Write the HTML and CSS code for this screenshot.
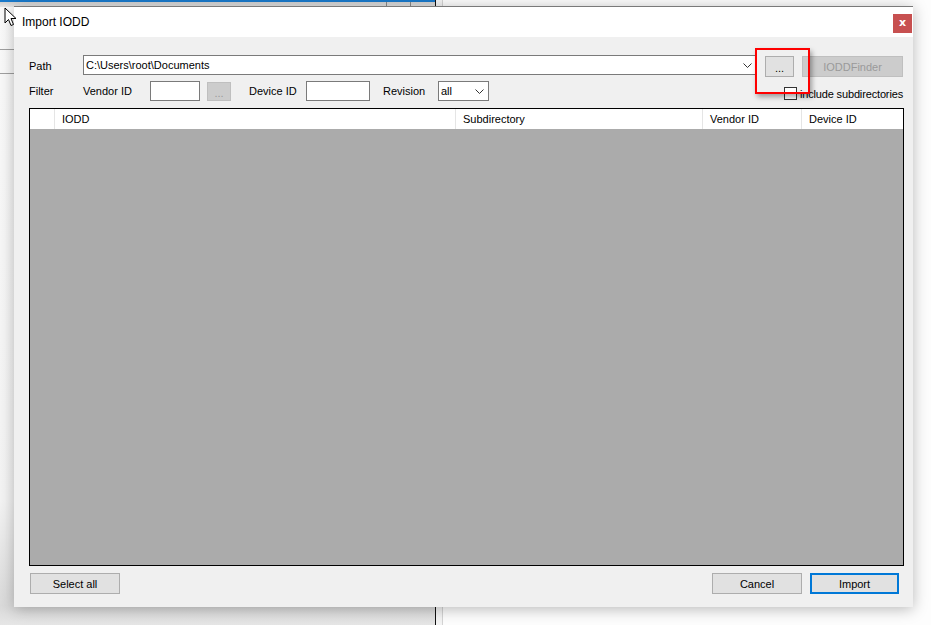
FILE: index.html
```html
<!DOCTYPE html>
<html>
<head>
<meta charset="utf-8">
<link rel="stylesheet" href="styles.css">
</head>
<body>
<div class="desktop">
  <div class="bg-left">
    <div class="bg-topbar"><span class="sep s1"></span><span class="sep s2"></span></div>
    <div class="bg-row r1"></div>
    <div class="bg-row r2"></div>
  </div>
  <div class="bg-divider"></div>
  <div class="bg-right"></div>

  <div class="dialog">
    <div class="titlebar">
      <span class="title">Import IODD</span>
      <span class="close">x</span>
    </div>
    <div class="body">
      <div class="row row-path">
        <span class="lbl w-path">Path</span>
        <div class="combo path-combo">
          <span class="combo-text">C:\Users\root\Documents</span>
          <svg class="chev" width="9" height="5" viewBox="0 0 9 5"><path d="M0.5 0.5 L4.5 4.5 L8.5 0.5" fill="none" stroke="#333" stroke-width="1"/></svg>
        </div>
        <button class="btn browse">...</button>
        <button class="btn disabled finder">IODDFinder</button>
      </div>
      <div class="row row-filter">
        <span class="lbl w-filter">Filter</span>
        <span class="lbl w-vendor">Vendor ID</span>
        <span class="input in-vendor"></span>
        <button class="btn disabled small">...</button>
        <span class="lbl w-device">Device ID</span>
        <span class="input in-device"></span>
        <span class="lbl w-rev">Revision</span>
        <div class="combo rev-combo">
          <span class="combo-text">all</span>
          <svg class="chev" width="9" height="5" viewBox="0 0 9 5"><path d="M0.5 0.5 L4.5 4.5 L8.5 0.5" fill="none" stroke="#333" stroke-width="1"/></svg>
        </div>
        <span class="spacer"></span>
        <label class="check"><span class="box"></span><span class="check-text">include subdirectories</span></label>
      </div>
      <div class="grid">
        <div class="grid-head">
          <span class="col c0"></span>
          <span class="col c1">IODD</span>
          <span class="col c2">Subdirectory</span>
          <span class="col c3">Vendor ID</span>
          <span class="col c4">Device ID</span>
        </div>
        <div class="grid-body"></div>
      </div>
      <div class="row row-bottom">
        <button class="btn wide">Select all</button>
        <span class="spacer"></span>
        <button class="btn wide">Cancel</button>
        <button class="btn wide primary">Import</button>
      </div>
    </div>
    <div class="highlight"></div>
  </div>

  <svg class="cursor" width="14" height="20" viewBox="0 0 14 20"><path d="M1 1 L1 16 L4.5 12.5 L7 18.5 L9.5 17.5 L7 11.5 L12 11.5 Z" fill="#fff" stroke="#000" stroke-width="1" stroke-linejoin="miter"/></svg>
</div>
</body>
</html>
```

FILE: styles.css
```css
html, body {
  margin: 0;
  padding: 0;
}
body {
  width: 931px;
  height: 625px;
  overflow: hidden;
  font-family: "Liberation Sans", Arial, sans-serif;
  font-size: 11px;
  color: #000;
  background: #f0f0f0;
}
.desktop {
  position: relative;
  width: 931px;
  height: 625px;
  overflow: hidden;
}
.bg-left {
  position: absolute;
  left: 0;
  top: 0;
  width: 435px;
  height: 625px;
  background: linear-gradient(#fafafa, #f4f4f4 80%, #dadada 97%, #e6e6e6);
}
.bg-topbar {
  position: relative;
  height: 5px;
  border-top: 2px solid #1979ca;
  background: linear-gradient(#d0d0d0, #e8e8e8);
}
.bg-topbar .sep {
  position: absolute;
  top: 0;
  width: 1px;
  height: 5px;
  background: #8a8a8a;
}
.sep.s1 { left: 386px; }
.sep.s2 { left: 410px; }
.bg-row {
  position: absolute;
  left: 0;
  width: 435px;
  height: 1px;
  background: #a0a0a0;
}
.bg-row.r1 { top: 49px; }
.bg-row.r2 { top: 73px; }
.bg-divider {
  position: absolute;
  left: 435px;
  top: 0;
  width: 1px;
  height: 625px;
  background: #111;
}
.bg-right {
  position: absolute;
  left: 436px;
  top: 0;
  width: 495px;
  height: 625px;
  border-left: 6px solid #f4f4f4;
  box-sizing: border-box;
  background: #fdfdfd;
}
.bg-right::before {
  content: "";
  position: absolute;
  left: 0;
  top: 0;
  width: 1px;
  height: 625px;
  background: #d4d4d4;
}

.dialog {
  position: absolute;
  left: 14px;
  top: 6px;
  width: 899px;
  height: 601px;
  background: #f0f0f0;
  border-top: 1px solid #7a7a7a;
  box-sizing: border-box;
  box-shadow: 0 2px 14px rgba(0, 0, 0, 0.28);
  display: flex;
  flex-direction: column;
}
.titlebar {
  height: 30px;
  background: #fff;
  display: flex;
  align-items: center;
  padding-left: 8px;
  position: relative;
  flex: none;
}
.title {
  font-size: 12px;
  color: #000;
}
.close {
  position: absolute;
  right: 1px;
  top: 7px;
  width: 19px;
  height: 19px;
  background: #c75050;
  color: #fff;
  font-weight: bold;
  font-size: 11px;
  line-height: 17px;
  text-align: center;
  font-family: "DejaVu Sans", sans-serif;
}
.body {
  flex: 1;
  padding: 18px 9px 0 15px;
  display: flex;
  flex-direction: column;
}
.row {
  display: flex;
  align-items: center;
}
.row-path { height: 22px; }
.lbl { white-space: nowrap; flex: none; }
.w-path { width: 54px; }
.combo {
  height: 20px;
  box-sizing: border-box;
  border: 1px solid #7a7a7a;
  background: #fff;
  display: flex;
  align-items: center;
  position: relative;
  flex: none;
}
.combo-text { padding-left: 2px; }
.chev { position: absolute; right: 4px; top: 7px; }
.path-combo { width: 674px; align-self: flex-start; }
.btn {
  font-family: inherit;
  font-size: 11px;
  color: #000;
  background: #e1e1e1;
  border: 1px solid #adadad;
  box-sizing: border-box;
  padding: 0;
  margin: 0;
  flex: none;
}
.btn.disabled {
  background: #cccccc;
  border-color: #bfbfbf;
  color: #9a9a9a;
}
.browse {
  width: 29px;
  height: 21px;
  margin-left: 8px;
  margin-top: 1px;
  line-height: 18px;
  padding-top: 2px;
}
.finder {
  width: 101px;
  height: 21px;
  margin-left: 8px;
  margin-top: 1px;
}
.row-filter {
  height: 20px;
  margin-top: 4px;
}
.w-filter { width: 54px; }
.w-vendor { width: 67px; }
.input {
  height: 20px;
  box-sizing: border-box;
  border: 1px solid #7a7a7a;
  background: #fff;
  flex: none;
}
.in-vendor { width: 50px; }
.btn.small {
  width: 24px;
  height: 19px;
  margin-left: 7px;
  margin-top: 1px;
  padding-top: 3px;
  line-height: 14px;
}
.w-device { width: 57px; margin-left: 18px; }
.in-device { width: 64px; }
.w-rev { width: 55px; margin-left: 13px; }
.rev-combo { width: 51px; }
.spacer { flex: 1; }
.check {
  display: flex;
  align-items: center;
  margin-top: 5px;
  margin-right: 1px;
}
.check .box {
  width: 13px;
  height: 13px;
  box-sizing: border-box;
  border: 1px solid #333;
  background: #fff;
  margin-right: 3px;
}
.check-text { letter-spacing: -0.15px; }
.grid {
  margin-top: 7px;
  height: 458px;
  border: 1px solid #000;
  box-sizing: border-box;
  display: flex;
  flex-direction: column;
}
.grid-head {
  height: 20px;
  background: #fff;
  display: flex;
  flex: none;
}
.col {
  box-sizing: border-box;
  border-right: 1px solid #e5e5e5;
  padding-left: 7px;
  line-height: 21px;
  white-space: nowrap;
}
.c0 { width: 25px; }
.c1 { width: 401px; }
.c2 { width: 247px; }
.c3 { width: 99px; }
.c4 { flex: 1; border-right: none; }
.grid-body {
  flex: 1;
  background: #ababab;
}
.row-bottom {
  margin-top: 7px;
  padding-left: 1px;
  padding-right: 5px;
}
.btn.wide {
  width: 90px;
  height: 21px;
}
.row-bottom .btn.wide + .btn.wide { margin-left: 8px; }
.btn.primary {
  border: 2px solid #0078d7;
  width: 89px;
}
.highlight {
  position: absolute;
  left: 741px;
  top: 41px;
  width: 55px;
  height: 46px;
  box-sizing: border-box;
  border: 2px solid #ff0000;
  box-shadow: 2px 3px 5px rgba(0, 0, 0, 0.35);
}
.cursor {
  position: absolute;
  left: 4px;
  top: 7px;
}
```
